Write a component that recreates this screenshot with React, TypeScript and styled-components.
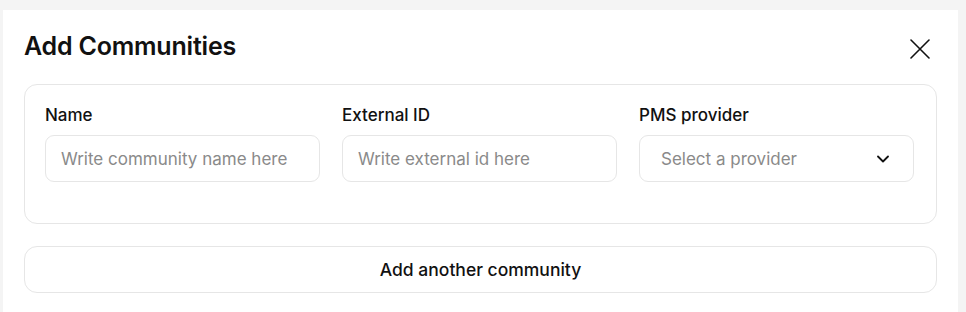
import styled, { createGlobalStyle } from "styled-components";

const GlobalStyle = createGlobalStyle`
  html, body {
    margin: 0;
    padding: 0;
    background: #f4f4f4;
    font-family: "Inter", "Noto Sans", sans-serif;
    color: #111;
  }
`;

const Page = styled.div`
  padding: 10px 8px 0 3px;
`;

const Panel = styled.div`
  width: 955px;
  min-height: 302px;
  box-sizing: border-box;
  background: #fff;
  padding: 22px 21px 20px 21px;
`;

const Header = styled.div`
  display: flex;
  align-items: center;
  justify-content: space-between;
  height: 28px;
  margin-bottom: 24px;
`;

const Title = styled.h2`
  margin: 0;
  font-size: 25px;
  font-weight: 600;
  letter-spacing: -0.2px;
  line-height: 28px;
`;

const CloseButton = styled.button`
  border: none;
  background: none;
  padding: 0;
  margin-right: 7px;
  margin-top: 6px;
  display: flex;
  cursor: pointer;
`;

const Card = styled.div`
  border: 1px solid #e6e6e6;
  border-radius: 13px;
  padding: 20px 20px 41px;
  display: grid;
  grid-template-columns: repeat(3, 275px);
  column-gap: 22px;
`;

const Field = styled.div`
  display: flex;
  flex-direction: column;
  gap: 10px;
`;

const Label = styled.label`
  font-size: 17px;
  font-weight: 500;
  line-height: 20px;
`;

const Input = styled.input`
  box-sizing: border-box;
  height: 47px;
  border: 1px solid #e6e6e6;
  border-radius: 9px;
  padding: 0 15px;
  font-family: inherit;
  font-size: 17px;
  color: #111;
  outline: none;
  &::placeholder {
    color: #8a8a8a;
  }
`;

const Select = styled.div`
  box-sizing: border-box;
  height: 47px;
  border: 1px solid #e6e6e6;
  border-radius: 9px;
  padding: 0 24px 0 21px;
  display: flex;
  align-items: center;
  justify-content: space-between;
  font-size: 17px;
  color: #8a8a8a;
`;

const AddButton = styled.button`
  margin-top: 22px;
  width: 100%;
  height: 47px;
  background: #fff;
  border: 1px solid #e6e6e6;
  border-radius: 13px;
  font-family: inherit;
  font-size: 17.5px;
  font-weight: 500;
  color: #111;
  cursor: pointer;
`;

const App = () => {
  return (
    <Page>
      <GlobalStyle />
      <Panel>
        <Header>
          <Title>Add Communities</Title>
          <CloseButton aria-label="Close">
            <svg width="20" height="20" viewBox="0 0 20 20" fill="none">
              <path d="M1 1L19 19M19 1L1 19" stroke="#111" strokeWidth="1.6" strokeLinecap="round" />
            </svg>
          </CloseButton>
        </Header>
        <Card>
          <Field>
            <Label>Name</Label>
            <Input placeholder="Write community name here" />
          </Field>
          <Field>
            <Label>External ID</Label>
            <Input placeholder="Write external id here" />
          </Field>
          <Field>
            <Label>PMS provider</Label>
            <Select>
              <span>Select a provider</span>
              <svg width="12" height="8" viewBox="0 0 12 8" fill="none">
                <path d="M1 1.5L6 6.5L11 1.5" stroke="#111" strokeWidth="1.8" strokeLinecap="round" strokeLinejoin="round" />
              </svg>
            </Select>
          </Field>
        </Card>
        <AddButton>Add another community</AddButton>
      </Panel>
    </Page>
  );
};

export default App;
